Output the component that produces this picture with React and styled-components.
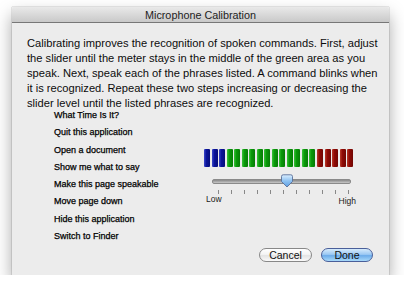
import React from 'react'
import styled, { createGlobalStyle } from 'styled-components'

const Global = createGlobalStyle`
  html, body { margin: 0; background: #fff; }
  body { font-family: "Liberation Sans", Arial, sans-serif; color: #111; }
`

const introLines = [
  'Calibrating improves the recognition of spoken commands. First, adjust',
  'the slider until the meter stays in the middle of the green area as you',
  'speak. Next, speak each of the phrases listed. A command blinks when',
  'it is recognized. Repeat these two steps increasing or decreasing the',
  'slider level until the listed phrases are recognized.',
]

const phrases = [
  'What Time Is It?',
  'Quit this application',
  'Open a document',
  'Show me what to say',
  'Make this page speakable',
  'Move page down',
  'Hide this application',
  'Switch to Finder',
]

const levels = [...Array(3).fill('blue'), ...Array(12).fill('green'), ...Array(5).fill('red')]

const barColors = {
  blue: ['#3a46c8', '#0a139a', '#060d7a'],
  green: ['#3ac23a', '#0a9a0a', '#067a06'],
  red: ['#b83a2a', '#900a05', '#700603'],
}

const Page = styled.div`
  padding: 7px 0 0 12px;
`

const Window = styled.div`
  width: 377px;
  height: 268px;
  background: #ececec;
  box-shadow: 0 8px 16px rgba(0, 0, 0, 0.35), 0 0 1px rgba(0, 0, 0, 0.5);
  display: flex;
  flex-direction: column;
`

const TitleBar = styled.div`
  height: 15px;
  background: linear-gradient(#e9e9e9, #c9c9c9);
  border-bottom: 1px solid #777;
  border-radius: 3px 3px 0 0;
  font-size: 10.8px;
  line-height: 16px;
  text-align: center;
  color: #222;
`

const Intro = styled.p`
  margin: 13px 0 0 15px;
  font-size: 11.15px;
  line-height: 15px;
  white-space: nowrap;
  color: #0c0c0c;
`

const Body = styled.div`
  display: grid;
  grid-template-columns: 150px 1fr;
  padding-left: 42px;
`

const List = styled.ul`
  list-style: none;
  margin: -4px 0 0;
  padding: 0;
`

const Phrase = styled.li`
  font-size: 9px;
  line-height: 17.3px;
  color: #000;
  -webkit-text-stroke: 0.25px #000;
`

const Meter = styled.div`
  margin-top: 38px;
  width: 149px;
  display: flex;
  gap: 1.5px;
`

const Bar = styled.div`
  flex: 1;
  height: 18px;
  border-radius: 1px;
  background: linear-gradient(to right, ${p => barColors[p.$tone][0]}, ${p => barColors[p.$tone][1]} 40%, ${p => barColors[p.$tone][2]});
`

const SliderBox = styled.div`
  width: 150px;
  margin-left: 2px;
  margin-top: 12px;
`

const Track = styled.div`
  position: relative;
  margin: 0 5px 0 6px;
  height: 3px;
  border-radius: 2px;
  background: linear-gradient(#888, #c8c8c8);
  border: 1px solid #8a8a8a;
`

const Thumb = styled.svg`
  position: absolute;
  left: 67px;
  top: -6px;
`

const Ticks = styled.div`
  display: flex;
  justify-content: space-between;
  padding: 0 7px 0 12px;
  margin-top: 6px;
`

const Tick = styled.span`
  width: 1px;
  height: 4px;
  background: #888;
`

const Labels = styled.div`
  display: flex;
  justify-content: space-between;
  font-size: 8.5px;
  line-height: 8px;
  margin-top: 1px;
  color: #1a1a1a;

  span:last-child {
    margin-top: 2px;
  }
`

const Footer = styled.div`
  margin-top: auto;
  display: flex;
  justify-content: flex-end;
  gap: 9px;
  padding: 0 16px 13px 0;
`

const Button = styled.button`
  height: 14px;
  padding: 0;
  width: ${p => p.$w}px;
  border-radius: 8px;
  font-family: inherit;
  font-size: 10.5px;
  line-height: 12px;
  color: #111;
  border: 1px solid ${p => (p.$primary ? '#4a5f9a' : '#888')};
  background: ${p =>
    p.$primary
      ? 'linear-gradient(#d6ebfc 0%, #9cc9f3 45%, #6cacea 55%, #a9dafa 100%)'
      : 'linear-gradient(#fff 0%, #f4f4f4 45%, #e4e4e4 55%, #fafafa 100%)'};
`

const App = () => {
  return (
    <Page>
      <Global />
      <Window>
        <TitleBar>Microphone Calibration</TitleBar>
        <Intro>
          {introLines.map((l, i) => (
            <React.Fragment key={i}>
              {l}
              {i < introLines.length - 1 && <br />}
            </React.Fragment>
          ))}
        </Intro>
        <Body>
          <List>
            {phrases.map(p => (
              <Phrase key={p}>{p}</Phrase>
            ))}
          </List>
          <div>
            <Meter>
              {levels.map((t, i) => (
                <Bar key={i} $tone={t} />
              ))}
            </Meter>
            <SliderBox>
              <Track>
                <Thumb width="14" height="14" viewBox="0 0 14 14">
                  <defs>
                    <linearGradient id="th" x1="0" y1="0" x2="0" y2="1">
                      <stop offset="0" stopColor="#dcefff" />
                      <stop offset="0.5" stopColor="#8ec2f2" />
                      <stop offset="1" stopColor="#5e9fe2" />
                    </linearGradient>
                  </defs>
                  <path d="M1.5 2.5 Q1.5 0.8 3.2 0.8 H10.8 Q12.5 0.8 12.5 2.5 V7.5 L7 13 L1.5 7.5 Z" fill="url(#th)" stroke="#5a6f99" strokeWidth="0.9" />
                </Thumb>
              </Track>
              <Ticks>
                {Array.from({ length: 11 }).map((_, i) => (
                  <Tick key={i} />
                ))}
              </Ticks>
              <Labels>
                <span>Low</span>
                <span>High</span>
              </Labels>
            </SliderBox>
          </div>
        </Body>
        <Footer>
          <Button $w={53}>Cancel</Button>
          <Button $w={52} $primary>Done</Button>
        </Footer>
      </Window>
    </Page>
  )
}

export default App
